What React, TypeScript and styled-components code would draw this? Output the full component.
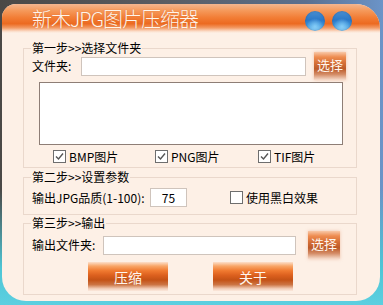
import React from "react";
import styled, { createGlobalStyle } from "styled-components";

const GlobalStyle = createGlobalStyle`
  html, body {
    margin: 0;
    padding: 0;
    width: 383px;
    height: 305px;
    overflow: hidden;
  }
  body {
    font-family: "Noto Sans CJK SC", "Noto Sans", sans-serif;
    font-size: 12px;
    color: #000;
    background:
      linear-gradient(180deg, rgba(78, 198, 214, 0) 0%, rgba(78, 198, 214, 0) 62%, #4ec6d6 88%, #5ccfe0 100%),
      linear-gradient(90deg, #4a4846 0%, #5b5e64 45%, #5a7090 80%, #6b94c8 100%);
  }
`;

const Window = styled.div`
  width: 378px;
  height: 297px;
  margin: 4px 0 0 2px;
  background: #fdf0e6;
  border-radius: 14px 24px 24px 24px;
  overflow: hidden;
  display: flex;
  flex-direction: column;
`;

const Header = styled.div`
  height: 29px;
  flex: none;
  padding: 0 28px 0 30px;
  display: flex;
  align-items: center;
  justify-content: space-between;
  background: linear-gradient(
    180deg,
    #f3b690 0%,
    #f59a5c 22%,
    #f27c34 48%,
    #ec6a20 68%,
    #f39a64 82%,
    #fbdcc8 94%,
    #fdf0e6 100%
  );
`;

const Title = styled.span`
  font-size: 20px;
  line-height: 24px;
  font-weight: 300;
  color: #fff4ea;
  letter-spacing: -1px;
  text-shadow: 0 0 1px rgba(200, 90, 30, 0.6);
  margin-top: 1px;
`;

const Balls = styled.div`
  display: flex;
  gap: 7px;
  margin-top: 4px;
`;

const Ball = styled.span`
  width: 20px;
  height: 20px;
  border-radius: 50%;
  background:
    radial-gradient(circle at 50% 78%, rgba(140, 210, 250, 0.9) 0%, rgba(140, 210, 250, 0) 45%),
    linear-gradient(180deg, #4a8fd0 0%, #2a78c8 45%, #3d96dc 70%, #7ec4ee 100%);
  box-shadow: inset 0 0 2px rgba(20, 60, 120, 0.5);
`;

const Body = styled.div`
  padding: 8px 23px 0 21px;
  display: flex;
  flex-direction: column;
`;

const Group = styled.fieldset<{ $gap: number; $padBottom: number }>`
  margin: ${({ $gap }) => $gap}px 0 0 0;
  padding: 0 6px ${({ $padBottom }) => $padBottom}px 7px;
  border: 1px solid #ead8cc;
  min-width: 0;
`;

const Legend = styled.legend`
  padding: 0 1px;
  font-size: 12px;
  line-height: 14px;
`;

const Row = styled.div<{ $top: number }>`
  display: flex;
  align-items: center;
  margin-top: ${({ $top }) => $top}px;
`;

const Label = styled.span<{ $width?: number }>`
  font-size: 12px;
  line-height: 14px;
  margin-left: 1px;
  white-space: nowrap;
  ${({ $width }) => ($width ? `width: ${$width}px;` : "")}
`;

const TextInput = styled.input<{ $width: number; $left: number }>`
  box-sizing: border-box;
  width: ${({ $width }) => $width}px;
  height: 19px;
  margin: 0 0 0 ${({ $left }) => $left}px;
  padding: 0 2px;
  border: 1px solid #cfc4bc;
  background: #fff;
  font-family: "Noto Sans CJK SC", sans-serif;
  font-size: 12px;
  text-align: ${({ $width }) => ($width < 60 ? "center" : "left")};
  outline: none;
`;

const PickButton = styled.button<{ $left: number }>`
  width: 32px;
  height: 28px;
  margin: 0 0 0 ${({ $left }) => $left}px;
  padding: 0 0 3px;
  border: none;
  font-family: "Noto Sans CJK SC", sans-serif;
  font-size: 13px;
  line-height: 14px;
  color: #fff6ee;
  background: linear-gradient(
    180deg,
    #f8c8a8 0%,
    #ee8c50 18%,
    #d46e36 40%,
    #bc5a28 60%,
    #d48c66 80%,
    #f6dccc 100%
  );
  box-shadow: 0 0 3px rgba(230, 150, 110, 0.5);
`;

const ListBox = styled.div`
  box-sizing: border-box;
  width: 304px;
  height: 63px;
  margin: 2px 0 0 8px;
  border: 1px solid #8e7e76;
  background: #fff;
`;

const CheckRow = styled.div`
  display: grid;
  grid-template-columns: 102px 103px auto;
  margin: 4px 0 0 22px;
  height: 15px;
  align-items: center;
`;

const CheckItem = styled.label<{ $left?: number }>`
  display: flex;
  align-items: center;
  gap: 3px;
  font-size: 12px;
  line-height: 14px;
  margin-left: ${({ $left }) => $left ?? 0}px;
  white-space: nowrap;
`;

const Box = styled.span`
  box-sizing: border-box;
  width: 13px;
  height: 13px;
  border: 1px solid #6e6e6e;
  background: #fff;
  display: flex;
  align-items: center;
  justify-content: center;
`;

const ActionRow = styled.div`
  display: flex;
  gap: 45px;
  margin: 3px 0 0 57px;
`;

const ActionButton = styled.button`
  width: 80px;
  height: 29px;
  padding: 0;
  border: none;
  font-family: "Noto Sans CJK SC", sans-serif;
  font-size: 14px;
  color: #fff6ee;
  background: linear-gradient(
    180deg,
    #fce0cc 0%,
    #f8a668 14%,
    #f07a30 30%,
    #dc601e 46%,
    #c45216 62%,
    #cc7444 78%,
    #f2cdb8 92%,
    #fbe8dc 100%
  );
`;

function Check({ checked }: { checked: boolean }) {
  return (
    <Box>
      {checked && (
        <svg width="9" height="9" viewBox="0 0 9 9">
          <path d="M1 4.5 L3.5 7 L8 1.5" fill="none" stroke="#555" strokeWidth="1.4" />
        </svg>
      )}
    </Box>
  );
}

export default function App() {
  return (
    <>
      <GlobalStyle />
      <Window>
        <Header>
          <Title>新木JPG图片压缩器</Title>
          <Balls>
            <Ball />
            <Ball />
          </Balls>
        </Header>
        <Body>
          <Group $gap={0} $padBottom={3}>
            <Legend>第一步&gt;&gt;选择文件夹</Legend>
            <Row $top={-3}>
              <Label $width={42}>文件夹:</Label>
              <TextInput $width={225} $left={7} defaultValue="" />
              <PickButton $left={8}>选择</PickButton>
            </Row>
            <ListBox />
            <CheckRow>
              <CheckItem>
                <Check checked />
                BMP图片
              </CheckItem>
              <CheckItem>
                <Check checked />
                PNG图片
              </CheckItem>
              <CheckItem>
                <Check checked />
                TIF图片
              </CheckItem>
            </CheckRow>
          </Group>
          <Group $gap={2} $padBottom={7}>
            <Legend>第二步&gt;&gt;设置参数</Legend>
            <Row $top={4}>
              <Label $width={116}>输出JPG品质(1-100):</Label>
              <TextInput $width={37} $left={2} defaultValue="75" />
              <CheckItem $left={43}>
                <Check checked={false} />
                使用黑白效果
              </CheckItem>
            </Row>
          </Group>
          <Group $gap={1} $padBottom={3}>
            <Legend>第三步&gt;&gt;输出</Legend>
            <Row $top={1}>
              <Label $width={70}>输出文件夹:</Label>
              <TextInput $width={193} $left={1} defaultValue="" />
              <PickButton $left={12}>选择</PickButton>
            </Row>
            <ActionRow>
              <ActionButton>压缩</ActionButton>
              <ActionButton>关于</ActionButton>
            </ActionRow>
          </Group>
        </Body>
      </Window>
    </>
  );
}
